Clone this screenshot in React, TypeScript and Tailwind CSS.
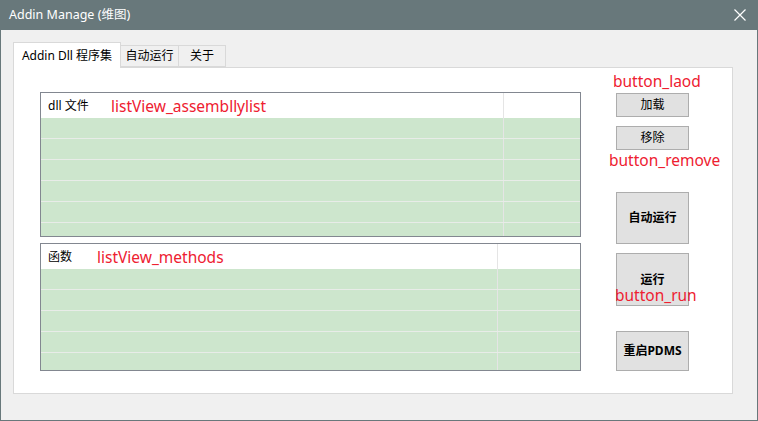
import React from "react";

const font = { fontFamily: '"Noto Sans", "Noto Sans CJK SC", sans-serif' };

function ListView({ header, h, divider, rows }: { header: string; h: string; divider: number; rows: number }) {
  return (
    <div className={`relative border border-[#828790] bg-[#cde6cd] overflow-hidden ${h}`}>
      <div className="flex h-[25px] bg-white">
        <div className="flex items-center pl-[7px] text-[12px] text-black" style={{ width: divider }}>
          {header}
        </div>
        <div className="w-px bg-[#e5e5e5]" />
        <div className="flex-1 mr-[1px]" />
      </div>
      {Array.from({ length: rows }).map((_, i) => (
        <div key={i} className="flex h-[21px] border-b border-[#e8ece8]">
          <div style={{ width: divider }} />
          <div className="w-px bg-[#e5e5e5]" />
        </div>
      ))}
    </div>
  );
}

function Btn({ label, h, bold, className = "" }: { label: string; h: string; bold?: boolean; className?: string }) {
  return (
    <div
      className={`flex w-[73px] items-center justify-center border border-[#adadad] bg-[#e1e1e1] text-[12px] text-black ${h} ${bold ? "font-bold" : ""} ${className}`}
    >
      {label}
    </div>
  );
}

export default function App() {
  return (
    <div className="flex h-[421px] w-[758px] flex-col border-x border-b border-[#68787b] bg-[#f0f0f0]" style={font}>
      <div className="flex h-[30px] shrink-0 items-center justify-between bg-[#68787b] pl-[8px] pr-[10px] text-[12.5px] text-white">
        <span>Addin Manage (维图)</span>
        <svg width="12" height="12" viewBox="0 0 12 12" className="mr-[1px]">
          <path d="M0.5 0.5 L11.5 11.5 M11.5 0.5 L0.5 11.5" stroke="white" strokeWidth="1.2" />
        </svg>
      </div>
      <div className="flex flex-1 flex-col pl-[12px] pr-[24px] pt-[12px] pb-[26px]">
        <div className="flex h-[25px] items-end text-[12px] text-black">
          <div className="relative z-10 -mb-px flex h-[26px] w-[108px] items-center justify-center border border-b-0 border-[#d9d9d9] bg-white">
            Addin Dll 程序集
          </div>
          <div className="flex h-[22px] w-[58px] items-center justify-center border border-l-0 border-[#d9d9d9] bg-[#f0f0f0]">
            自动运行
          </div>
          <div className="flex h-[22px] w-[47px] items-center justify-center border border-l-0 border-[#d9d9d9] bg-[#f0f0f0]">
            关于
          </div>
        </div>
        <div className="relative flex flex-1 border border-[#d9d9d9] bg-white pl-[26px] pt-[24px]">
          <div className="flex w-[541px] flex-col gap-[6px]">
            <ListView header="dll 文件" h="h-[145px]" divider={462} rows={6} />
            <ListView header="函数" h="h-[128px]" divider={456} rows={5} />
          </div>
          <div className="ml-[35px] flex flex-col pt-[1px]">
            <Btn label="加载" h="h-[24px]" />
            <Btn label="移除" h="h-[24px]" className="mt-[9px]" />
            <Btn label="自动运行" h="h-[52px]" bold className="mt-[42px]" />
            <Btn label="运行" h="h-[53px]" bold className="mt-[9px]" />
            <Btn label="重启PDMS" h="h-[40px]" bold className="mt-[25px]" />
          </div>
          <div className="pointer-events-none absolute left-[97px] top-[31px] text-[15.5px] leading-none text-[#ee2030]">listView_assembllylist</div>
          <div className="pointer-events-none absolute left-[83px] top-[182px] text-[15.5px] leading-none text-[#ee2030]">listView_methods</div>
          <div className="pointer-events-none absolute left-[599px] top-[6px] text-[15.5px] leading-none text-[#ee2030]">button_laod</div>
          <div className="pointer-events-none absolute left-[595px] top-[85px] text-[15.5px] leading-none text-[#ee2030]">button_remove</div>
          <div className="pointer-events-none absolute left-[601px] top-[220px] text-[15.5px] leading-none text-[#ee2030]">button_run</div>
        </div>
      </div>
    </div>
  );
}
